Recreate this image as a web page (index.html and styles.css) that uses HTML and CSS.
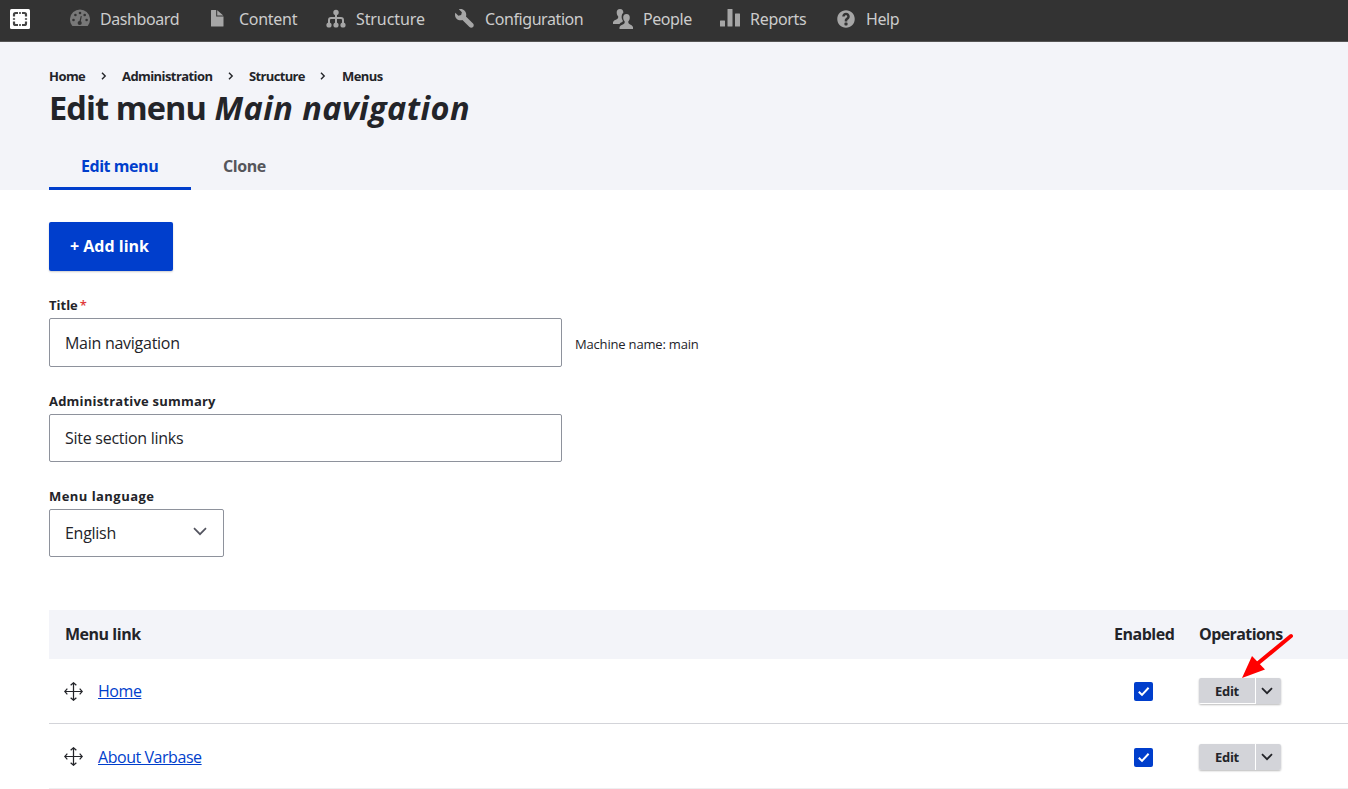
FILE: index.html
```html
<!DOCTYPE html>
<html lang="en">
<head>
<meta charset="utf-8">
<title>Edit menu Main navigation</title>
<link rel="stylesheet" href="styles.css">
</head>
<body>
<nav class="toolbar">
  <a class="brand"><svg width="20" height="20" viewBox="0 0 20 20"><rect width="20" height="20" rx="1.5" fill="#fff"/><path d="M4 7.500V5.500Q4 4 5.500 4H8M12 4H14.500Q16 4 16 5.500V7.500M16 12.500V14.500Q16 16 14.500 16H12M8 16H5.500Q4 16 4 14.500V12.500M9.200 4H10.800M9.200 16H10.800M4 9.200V10.800M16 9.200V10.800" fill="none" stroke="#444" stroke-width="2.200"/></svg></a>
  <a class="item dashboard"><svg class="icon" viewBox="0 0 20 20"><path d="M2 16.500A10 10 0 1 1 18 16.500Q17.700 17 17 17H3Q2.300 17 2 16.500Z" fill="#787878"/><g fill="#333"><circle cx="3.500" cy="11" r="1.300"/><circle cx="5.400" cy="6" r="1.300"/><circle cx="10" cy="4" r="1.300"/><circle cx="14.700" cy="6" r="1.300"/><circle cx="16.600" cy="11" r="1.300"/><circle cx="9.700" cy="14" r="2.100"/><path d="M9.200 13L10.800 7L11.800 7.300L10.500 13.500Z"/></g></svg><span>Dashboard</span></a>
  <a class="item content"><svg class="icon file" viewBox="0 0 20 20"><path d="M3 1.500Q3 1 3.500 1H8.200V7.500H15.500V17Q15.500 17.500 15 17.500H3.500Q3 17.500 3 17ZM9.200 1.200L15.300 6.500H9.200Z"/></svg><span>Content</span></a>
  <a class="item structure"><svg class="icon" viewBox="0 0 20 20"><g fill="none" stroke="#a6a6a6" stroke-width="2"><path d="M10 3V16M3 16V11Q3 9 5 9H15Q17 9 17 11V16"/></g><circle cx="10" cy="3.500" r="2.700"/><circle cx="3" cy="16" r="2.600"/><circle cx="10" cy="16" r="2.600"/><circle cx="17" cy="16" r="2.600"/></svg><span>Structure</span></a>
  <a class="item config"><svg class="icon" viewBox="0 0 16 16"><path d="M14.416 11.586l-5.666-5.665c.15-.449.252-.921.252-1.421 0-2.485-2.016-4.500-4.502-4.500-.505 0-.981.102-1.434.255l2.431 2.431-.588 2.196-2.196.588L.268 3.025C.106 3.489 0 3.981 0 4.500c0 2.486 2.014 4.500 4.500 4.500.5 0 .972-.102 1.421-.251l5.667 5.665c.781.781 2.047.781 2.828 0s.781-2.047 0-2.828z"/></svg><span>Configuration</span></a>
  <a class="item people"><svg class="icon" viewBox="0 0 20 20"><path d="M7 0C4.700 0 3.600 1.600 3.700 3.800C3.800 5.500 4.400 6.700 5.300 7.700Q5.400 9.600 3.800 10.200Q.5 11.300 0 13V15H6.500Q7.300 13.500 9.300 13Q10.100 12.500 9.800 11.600C8.500 9.800 8.300 7.400 9.100 5.200Q9.500 4.500 10.300 4C10.500 1.500 9.300 0 7 0Z"/><path d="M13.500 5C11.200 5 10.100 6.600 10.200 8.800C10.300 10.500 10.900 11.700 11.800 12.700Q11.900 14.600 10.300 15.200Q7 16.300 6.500 18V20H20V18Q19.500 16.300 16.700 15.200Q15.100 14.600 15.200 12.700C16.100 11.700 16.700 10.500 16.800 8.800C16.900 6.600 15.800 5 13.500 5Z"/></svg><span>People</span></a>
  <a class="item reports"><svg class="icon" viewBox="0 0 20 20"><rect y="11.500" width="5" height="6" rx=".5"/><rect x="7.500" y="0" width="5" height="17.500" rx=".5"/><rect x="15" y="4.500" width="5" height="13" rx=".5"/></svg><span>Reports</span></a>
  <a class="item"><svg class="icon" viewBox="0 0 16 16"><path d="M8.002 1c-3.868 0-7.002 3.134-7.002 7s3.134 7 7.002 7c3.865 0 7-3.134 7-7s-3.135-7-7-7zm3 5c0 .551-.16 1.085-.477 1.586l-.158.22c-.07.093-.189.241-.361.393-.168.148-.35.299-.545.447l-.203.189-.141.129-.096.17-.021.235v.63h-2.001v-.704c.026-.396.078-.73.204-.999.125-.269.271-.498.439-.688l.225-.21-.01-.015.176-.14.137-.128c.186-.139.357-.277.516-.417l.148-.18c.098-.152.168-.323.168-.518 0-.552-.447-1-1-1s-1.002.448-1.002 1h-2c0-1.657 1.343-3 3.002-3 1.656 0 3 1.343 3 3zm-1.750 6.619c0 .344-.281.625-.625.625h-1.250c-.345 0-.626-.281-.626-.625v-1.238c0-.344.281-.625.626-.625h1.250c.344 0 .625.281.625.625v1.238z"/></svg><span>Help</span></a>
</nav>
<header class="page-header">
  <div class="breadcrumb">
    <span class="bc-home">Home</span><svg viewBox="0 0 6 8"><path d="M1 .8L4.200 4L1 7.200"/></svg>
    <span class="bc-admin">Administration</span><svg viewBox="0 0 6 8"><path d="M1 .8L4.200 4L1 7.200"/></svg>
    <span class="bc-structure">Structure</span><svg viewBox="0 0 6 8"><path d="M1 .8L4.200 4L1 7.200"/></svg>
    <span class="bc-menus">Menus</span>
  </div>
  <h1><span>Edit menu</span> <em>Main navigation</em></h1>
  <div class="tabs"><a class="tab active"><span>Edit menu</span></a><a class="tab clone"><span>Clone</span></a></div>
</header>
<main>
  <a class="add"><span>+ Add link</span></a>
  <div class="field title-field">
    <label><span>Title</span><b class="star">*</b></label>
    <div class="row"><div class="input"><span>Main navigation</span></div><span class="machine">Machine name: main</span></div>
  </div>
  <div class="field summary-field">
    <label><span class="l-summary">Administrative summary</span></label>
    <div class="input short"><span>Site section links</span></div>
  </div>
  <div class="field lang-field">
    <label><span class="l-lang">Menu language</span></label>
    <div class="input short select"><span>English</span><svg width="14" height="9" viewBox="0 0 14 9"><path d="M1 1.200L7 7.200L13 1.200" fill="none" stroke="#545560" stroke-width="1.700"/></svg></div>
  </div>
  <div class="table">
    <div class="tr head"><span class="c1">Menu link</span><span class="c2">Enabled</span><span class="c3 h-ops">Operations</span></div>
    <div class="tr">
      <span class="c1"><svg class="move" viewBox="0 0 20 20"><path d="M10 1V19M1 10H19M7 3.500L10 .8L13 3.500M7 16.500L10 19.200L13 16.500M3.500 7L.8 10L3.500 13M16.500 7L19.200 10L16.500 13"/></svg><a class="link">Home</a></span>
      <span class="c2"><span class="check"><svg viewBox="0 0 19 19"><path d="M4.800 9.700L8 12.900L14.600 5.800"/></svg></span></span>
      <span class="c3"><span class="ops"><span class="edit lined">Edit</span><span class="toggle"><svg viewBox="0 0 12 8"><path d="M1 1.200L6 6.200L11 1.200"/></svg></span></span></span>
    </div>
    <div class="tr last">
      <span class="c1"><svg class="move" viewBox="0 0 20 20"><path d="M10 1V19M1 10H19M7 3.500L10 .8L13 3.500M7 16.500L10 19.200L13 16.500M3.500 7L.8 10L3.500 13M16.500 7L19.200 10L16.500 13"/></svg><a class="link">About Varbase</a></span>
      <span class="c2"><span class="check"><svg viewBox="0 0 19 19"><path d="M4.800 9.700L8 12.900L14.600 5.800"/></svg></span></span>
      <span class="c3"><span class="ops"><span class="edit">Edit</span><span class="toggle"><svg viewBox="0 0 12 8"><path d="M1 1.200L6 6.200L11 1.200"/></svg></span></span></span>
    </div>
    <svg class="arrow" width="54" height="48" viewBox="0 0 54 48"><path d="M51 5L17 33" stroke="#f00" stroke-width="4" stroke-linecap="round"/><path d="M2 47L12 25L25 38.500Z" fill="#f00"/></svg>
  </div>
</main>
</body>
</html>
```
FILE: styles.css
```css
* { box-sizing: border-box; }
body { margin: 0; width: 1348px; height: 789px; overflow: hidden; background: #fff; color: #232429; font: 16px/24px "Open Sans", "Noto Sans", sans-serif; }
svg { display: block; flex: none; }
span, a { white-space: nowrap; }
.toolbar { display: flex; height: 42px; background: #333; border-bottom: 1px solid #555; padding: 0 0 3px 10px; align-items: center; color: #ccc; font-family: "Noto Sans", sans-serif; font-size: 16px; letter-spacing: -.42px; }
.brand { width: 60px; }
.item { display: flex; gap: 10px; align-items: center; }
.icon { width: 20px; height: 20px; fill: #a6a6a6; }
.file { margin-left: -1px; margin-right: 1px; }
.dashboard { width: 139px; }
.content { width: 117px; letter-spacing: -.28px; }
.structure { width: 129px; letter-spacing: -.1px; }
.config { width: 158px; }
.people { width: 107px; }
.reports { width: 116px; letter-spacing: -.3px; }
.page-header { height: 148px; background: #f3f4f9; padding: 24px 49px 0; }
.breadcrumb { display: flex; height: 20px; line-height: 20px; align-items: center; font-size: 13px; font-weight: 700; letter-spacing: -.58px; }
.breadcrumb svg { width: 6px; height: 8px; fill: none; stroke: #232429; stroke-width: 1.400; }
.bc-home { width: 52px; letter-spacing: -.55px; }
.bc-admin { width: 106px; margin-left: 15px; }
.bc-structure { width: 71px; margin-left: 15px; letter-spacing: -.65px; }
.bc-menus { margin-left: 16px; }
h1 { margin: 0; height: 44px; line-height: 44px; font-size: 32.500px; white-space: nowrap; letter-spacing: -.9px; }
h1 em { letter-spacing: .4px; margin-left: 1px; }
.tabs { display: flex; height: 60px; padding-top: 13px; letter-spacing: -.45px; }
.tab { height: 47px; line-height: 46px; padding-left: 32px; font-weight: 700; color: #55565b; }
.tab.active { width: 142px; color: #003ecc; border-bottom: 3px solid #003ecc; }
main { padding-left: 49px; }
.add { display: flex; width: 124px; height: 49px; margin-top: 32px; padding: 0 0 2px 21px; align-items: center; background: #003ecc; color: #fff; border-radius: 2px; font-weight: 700; box-shadow: 0 1px 2px #0003; }
label { display: flex; height: 23px; line-height: 20px; font-size: 13px; font-weight: 700; }
.star { color: #e0393c; margin-left: 2px; font-weight: 600; }
.l-summary { letter-spacing: .21px; }
.l-lang { letter-spacing: .45px; }
.field { margin-top: 24px; }
.row { display: flex; align-items: center; gap: 13px; }
.input { width: 513px; height: 49px; border: 1px solid #8e929c; border-radius: 2px; padding-left: 15px; display: flex; align-items: center; letter-spacing: -.27px; }
.input.short { height: 48px; }
.input.select { width: 175px; justify-content: space-between; padding-right: 16px; }
.select svg { margin-bottom: 3px; }
.machine { font-size: 13px; letter-spacing: -.18px; padding-top: 2px; }
.table { position: relative; margin-top: 53px; }
.tr { display: flex; height: 65px; align-items: center; border-bottom: 1px solid #d3d4d9; }
.tr.last { padding-top: 1px; border-color: #eeeff1; }
.tr.head { height: 49px; background: #f3f4f9; border: 0; padding-bottom: 1px; font-weight: 700; letter-spacing: -.48px; }
.tr .h-ops { letter-spacing: -.58px; }
.c1 { width: 1065px; padding-left: 16px; display: flex; align-items: center; }
.c2 { width: 85px; display: flex; }
.c3 { display: flex; }
.move { width: 19px; height: 19px; margin: 0 15px 0 -1px; fill: none; stroke: #232429; stroke-width: 1.300; }
.link { color: #003ecc; text-decoration: underline; letter-spacing: -.45px; }
.last .link { padding-top: 1px; }
.check { width: 19px; height: 19px; margin-left: 20px; background: #003ecc; border-radius: 2px; }
.check svg { fill: none; stroke: #fff; stroke-width: 2; }
.ops { display: flex; width: 81.500px; height: 26px; border-radius: 2px; box-shadow: 0 1px 2px #0004; overflow: hidden; line-height: 26px; font-size: 13px; letter-spacing: -.3px; font-weight: 700; }
.edit { width: 57px; padding-left: 16px; background: #d3d4d9; border-right: 1px solid #fff; }
.edit.lined { box-shadow: inset 0 -1px #fff; }
.toggle { width: 25px; background: #d3d4d9; display: flex; align-items: center; justify-content: center; padding-right: 2px; }
.toggle svg { width: 12px; height: 8px; fill: none; stroke: #232429; stroke-width: 1.800; }
.last .ops { margin-top: 1px; }
.last .check { margin-top: 1px; }
.arrow { position: absolute; left: 1190.500px; top: 21px; }
```
